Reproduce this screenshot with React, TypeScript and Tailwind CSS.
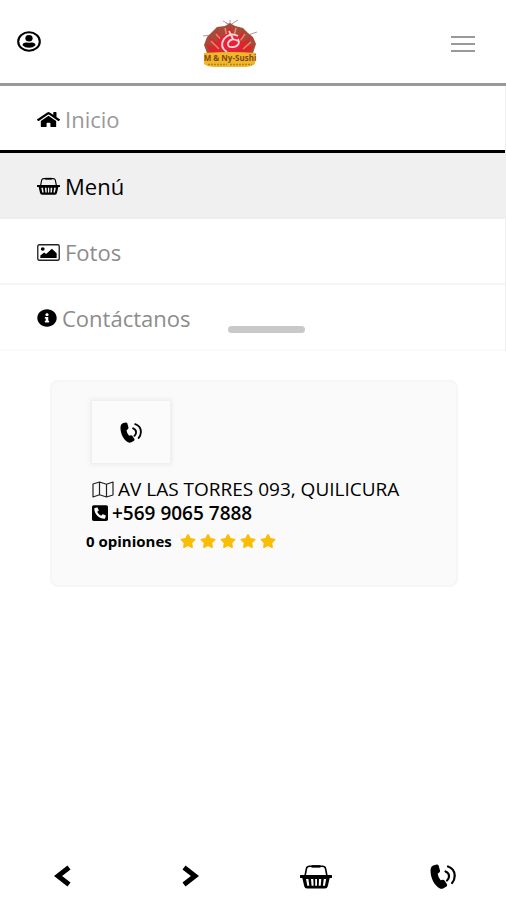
import type { ReactNode } from "react";
import { FaHome, FaInfoCircle, FaPhoneSquare, FaStar } from "react-icons/fa";

function UserIcon() {
  return (
    <svg viewBox="0 0 24 21" className="h-[21px] w-6" aria-hidden="true">
      <ellipse cx="12" cy="10.5" rx="10.8" ry="9.3" fill="none" stroke="#000" strokeWidth="2.1" />
      <ellipse cx="12" cy="7.2" rx="3.6" ry="3.2" />
      <path d="M5.5 14.3c0-2 2-3 4.500-2.700 1.400.3 2.600.3 4 0 2.500-.3 4.500.7 4.500 2.700-1.600 1.700-3.800 2.500-6.500 2.500s-4.900-.8-6.500-2.500z" />
    </svg>
  );
}

function BasketIcon({ className }: { className: string }) {
  return (
    <svg viewBox="0 0 32 26" preserveAspectRatio="none" className={className} aria-hidden="true">
      <path d="M5 12.500 6.500 4.500Q7 2.300 9.500 2.300H22.500Q25 2.300 25.500 4.500L27 12.500" fill="none" stroke="#000" strokeWidth="1.600" />
      <path d="M11.500 1.200h9v2.600h-9z" />
      <path
        fillRule="evenodd"
        d="M1 11.500h30a1 1 0 0 1 0 3h-1.300L27.700 23.500Q27.200 25.500 25 25.500H7Q4.800 25.500 4.300 23.500L2.300 14.500H1a1 1 0 0 1 0-3ZM6 15.500 7.300 22.500h2L8.400 15.500ZM11 15.500 11.600 22.500h2L13.300 15.500ZM15.200 15.500v7h1.800v-7ZM19 15.500 18.700 22.500h2L21.300 15.500ZM23.800 15.500 22.900 22.500h2L26.200 15.500Z"
      />
    </svg>
  );
}

function PictureIcon() {
  return (
    <svg viewBox="0 0 24 17" preserveAspectRatio="none" className="h-[17px] w-[23px]" aria-hidden="true">
      <rect x="0.800" y="0.800" width="22.400" height="15.400" rx="1.500" fill="none" stroke="#222" strokeWidth="1.400" />
      <ellipse cx="6" cy="5" rx="2" ry="1.700" />
      <path d="M3.500 14V11.500L7.500 8.500 9.500 10 15.500 4.800 20.500 9.200V14Z" />
    </svg>
  );
}

function MapIcon() {
  return (
    <svg viewBox="0 0 22 17" className="h-[17px] w-[22px]" aria-hidden="true">
      <path
        d="M1 3 7.500 1 14.500 3.200 21 1V14L14.500 16 7.500 13.800 1 16ZM7.500 1V13.800M14.500 3.200V16"
        fill="none"
        stroke="#222"
        strokeWidth="1.200"
        strokeLinejoin="round"
      />
    </svg>
  );
}

function CallIcon({ className }: { className: string }) {
  return (
    <svg viewBox="0 0 26 25" preserveAspectRatio="none" className={className} aria-hidden="true">
      <path d="M3.200 1.500 6.800.5Q8 .3 8.600 1.500L10 6.500Q10.200 7.900 9.200 8.500L7.700 9.700Q8 13 10.700 16.300L12.700 15.800Q13.800 15.600 14.500 16.500L17 20.300Q17.500 21.600 16.500 22.400L13.500 24.200Q11.400 25.200 9.500 24.200C4.400 21.200.6 14.500.5 6.500Q.6 2.700 3.200 1.500Z" />
      <g fill="none" stroke="#000" strokeLinecap="round" strokeWidth="2.200">
        <path d="M15.500 7.500Q19.200 9 19 12.500 18.800 15 17 16.500" />
        <path d="M18 2.500Q24.900 5 24.700 12 24.500 16.500 22.100 19" />
      </g>
    </svg>
  );
}

function MenuLink({ icon, label, row, text }: { icon: ReactNode; label: string; row: string; text: string }) {
  return (
    <li className={row}>
      <a href="#" className={`flex h-16 items-center gap-[5px] pt-[2px] pl-[37px] text-[22px] ${text}`}>
        <span className="text-black">{icon}</span>
        {label}
      </a>
    </li>
  );
}

export default function App() {
  return (
    <div className="flex min-h-screen flex-col bg-white font-['Open_Sans','Noto_Sans',sans-serif] text-black">
      <header className="flex h-[86px] items-center justify-between border-b-[3px] border-[#999] pr-[31px] pl-[17px]">
        <button type="button" aria-label="Mi cuenta">
          <UserIcon />
        </button>
        <a href="#" aria-label="Inicio" className="mr-8 pt-1">
          <svg viewBox="0 0 56 50" className="h-[50px] w-14" aria-hidden="true">
            <path d="M1 17 10 16M46 16 55 13M21 2 28 6 36 1M24 4 34 8M28 1V6" stroke="#b09a98" fill="none" />
            <path d="M28 4 33 7 41 9 46 14 51 18 54 25 51 34H5L2 26 5 18 10 13 15 8 23 7Z" fill="#a84a3a" />
            <path d="M7 31 4 25 12 28 7 18 16 24 14 12 21 20 28 8 34 20 42 12 40 24 49 18 44 28 52 26 47 34H9Z" fill="#dc2529" />
            <path d="M9 22 17 30M14 15 22 24M23 9 25 18M34 9 32 17M43 15 38 22M49 23 41 30" stroke="#e58a72" strokeWidth="1.500" />
            <ellipse cx="28" cy="24" rx="11" ry="9.500" fill="#e8203c" />
            <path d="M36 17Q28 13 22 20 17 28 25 33M36 22Q29 18 26 24 25 29 32 28 39 26 36 20M27 12 31 20" fill="none" stroke="#ffd9d2" strokeWidth="1.800" />
            <path d="M2 34Q28 32 54 34L53 45Q49 48 42 48H13Q5 48 2 45Z" fill="#edb92a" />
            <text x="28" y="42" textAnchor="middle" fill="#8a4510" className="text-[8px] font-bold">
              M &amp; Ny-Sushi
            </text>
            <path d="M6 45.500H25M28 45.500H50" stroke="#b98218" strokeWidth="1.500" strokeDasharray="2 1" />
          </svg>
        </a>
        <button type="button" aria-label="Abrir menú" className="flex w-6 flex-col gap-[5px] pt-1">
          <span className="h-[2px] w-full bg-[#999]" />
          <span className="h-[2px] w-full bg-[#999]" />
          <span className="h-[2px] w-full bg-[#999]" />
        </button>
      </header>

      <nav className="relative border-r border-[#eee]">
        <ul>
          <MenuLink
            icon={<FaHome preserveAspectRatio="none" className="h-[17px] w-[23px]" />}
            label="Inicio"
            row="border-b-[3px] border-black"
            text="text-[#999]"
          />
          <MenuLink
            icon={<BasketIcon className="h-[18px] w-[23px]" />}
            label="Menú"
            row="border-b-2 border-[#eee] bg-[#f0f0f0]"
            text="text-black"
          />
          <MenuLink icon={<PictureIcon />} label="Fotos" row="border-b-2 border-[#f5f5f5]" text="text-[#8c8c8c]" />
          <MenuLink
            icon={<FaInfoCircle preserveAspectRatio="none" className="h-[18px] w-5" />}
            label="Contáctanos"
            row="border-b-2 border-[#fafafa]"
            text="text-[#8c8c8c]"
          />
        </ul>
        <div className="absolute bottom-[18px] left-[228px] h-[7px] w-[77px] rounded-full bg-[#c9c9c9]" />
      </nav>

      <main className="flex-1 pt-[29px] pr-12 pl-[50px]">
        <section className="rounded-lg border-2 border-[#f6f6f6] bg-[#fafafa] pt-[19px] pb-7 pl-10">
          <button
            type="button"
            aria-label="Llamar"
            className="flex h-[62px] w-[78px] items-center justify-center bg-[#fbfbfb] shadow-[0_0_4px_2px_#ececec]"
          >
            <CallIcon className="h-[21px] w-[22px]" />
          </button>
          <p className="mt-[14px] flex h-6 items-center gap-1 text-[19px] whitespace-nowrap">
            <MapIcon />
            AV LAS TORRES 093, QUILICURA
          </p>
          <p className="flex h-6 items-center gap-1 text-[19px] font-semibold">
            <FaPhoneSquare preserveAspectRatio="none" className="h-[18px] w-4 -scale-x-100" />
            <a href="tel:+56990657888">+569 9065 7888</a>
          </p>
          <div className="-ml-[6px] flex h-8 items-center gap-2 text-[15px] font-bold">
            0 opiniones
            <span className="flex gap-1 text-[#fbbc05]">
              {[1, 2, 3, 4, 5].map((n) => (
                <FaStar key={n} preserveAspectRatio="none" className="h-[14px] w-4" />
              ))}
            </span>
          </div>
        </section>
      </main>

      <footer className="grid h-[50px] grid-cols-4 items-center justify-items-center pt-[2px]">
        <button type="button" aria-label="Anterior">
          <svg viewBox="0 0 18 22" className="h-[22px] w-[18px]" aria-hidden="true">
            <path d="M15 2.500 4 11 15 19.500" fill="none" stroke="#000" strokeWidth="5" />
          </svg>
        </button>
        <button type="button" aria-label="Siguiente">
          <svg viewBox="0 0 18 22" className="h-[22px] w-[18px]" aria-hidden="true">
            <path d="M3 2.500 14 11 3 19.500" fill="none" stroke="#000" strokeWidth="5" />
          </svg>
        </button>
        <button type="button" aria-label="Pedido">
          <BasketIcon className="h-[25px] w-8" />
        </button>
        <button type="button" aria-label="Teléfono">
          <CallIcon className="h-[25px] w-[26px]" />
        </button>
      </footer>
    </div>
  );
}
